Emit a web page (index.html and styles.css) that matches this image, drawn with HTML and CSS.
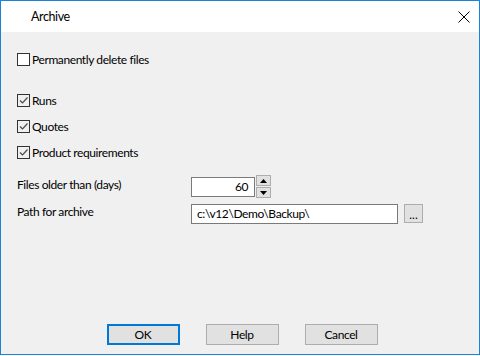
FILE: index.html
```html
<!doctype html>
<html lang="en">
  <head>
    <meta charset="UTF-8" />
    <title>Archive</title>
    <link rel="stylesheet" href="styles.css">
  </head>
  <body>
    <div class="window">
      <div class="titlebar">
        <span class="title">Archive</span>
        <svg class="close" width="12" height="12" viewBox="0 0 12 12">
          <path d="M0.5 0.5L11.5 11.5M11.5 0.5L0.5 11.5" stroke="#000" stroke-width="1" fill="none"/>
        </svg>
      </div>

      <div class="content">
        <label class="check">
          <span class="box"></span>
          <span>Permanently delete files</span>
        </label>

        <div class="check-group">
          <label class="check">
            <span class="box checked"><svg viewBox="0 0 11 11"><path d="M2 5.5L4.5 8L9.5 2.5" /></svg></span>
            <span>Runs</span>
          </label>
          <label class="check">
            <span class="box checked"><svg viewBox="0 0 11 11"><path d="M2 5.5L4.5 8L9.5 2.5" /></svg></span>
            <span>Quotes</span>
          </label>
          <label class="check">
            <span class="box checked"><svg viewBox="0 0 11 11"><path d="M2 5.5L4.5 8L9.5 2.5" /></svg></span>
            <span>Product requirements</span>
          </label>
        </div>

        <div class="fields">
          <span class="field-label">Files older than (days)</span>
          <div class="field-row">
            <div class="input number">60</div>
            <div class="spinner">
              <span class="spin up"><svg viewBox="0 0 7 4"><path d="M3.5 0L7 4H0z"/></svg></span>
              <span class="spin down"><svg viewBox="0 0 7 4"><path d="M0 0H7L3.5 4z"/></svg></span>
            </div>
          </div>

          <span class="field-label">Path for archive</span>
          <div class="field-row">
            <div class="input path">c:\v12\Demo\Backup\</div>
            <button class="browse">...</button>
          </div>
        </div>
      </div>

      <div class="buttons">
        <button class="btn default">OK</button>
        <button class="btn">Help</button>
        <button class="btn">Cancel</button>
      </div>
    </div>
  </body>
</html>
```

FILE: styles.css
```css
* {
  margin: 0;
  padding: 0;
  box-sizing: border-box;
}

body {
  background: #fff;
  font-family: Lato, "Noto Sans", sans-serif;
  font-size: 12px;
  letter-spacing: -0.4px;
  color: #000;
}

.window {
  width: 480px;
  height: 355px;
  border: 1px solid #1883d7;
  background: #f0f0f0;
  display: flex;
  flex-direction: column;
}

.titlebar {
  height: 31px;
  background: #fff;
  display: flex;
  align-items: center;
  justify-content: space-between;
  padding: 0 9px 0 30px;
}

.title {
  font-size: 12.5px;
  margin-top: -1px;
}

.content {
  padding: 21px 16px 0;
}

.check {
  display: flex;
  align-items: center;
  height: 13px;
  line-height: 13px;
}

.box {
  width: 13px;
  height: 13px;
  border: 1px solid #333;
  background: #fff;
  margin-right: 2px;
  display: flex;
}

.box.checked {
  background: transparent;
}

.box svg {
  width: 11px;
  height: 11px;
  fill: none;
  stroke: #4a4a4a;
  stroke-width: 1.2;
}

.check-group {
  margin-top: 28px;
  display: flex;
  flex-direction: column;
  gap: 13px;
}

.fields {
  margin-top: 18px;
  display: grid;
  grid-template-columns: 174px auto;
  row-gap: 6px;
}

.field-label {
  line-height: 15px;
}

.field-row {
  display: flex;
  align-items: flex-start;
}

.input {
  height: 20px;
  border: 1px solid #7a7a7a;
  background: #fff;
  line-height: 18px;
  padding: 0 6px;
}

.number {
  width: 64px;
  text-align: right;
}

.path {
  width: 207px;
  padding-left: 5px;
}

.spinner {
  margin-left: 1px;
  margin-top: -2px;
  display: flex;
  flex-direction: column;
  gap: 1px;
}

.spin {
  width: 15px;
  height: 11px;
  background: #e1e1e1;
  border: 1px solid #adadad;
  display: flex;
  align-items: center;
  justify-content: center;
}

.spin svg {
  width: 7px;
  height: 4px;
  fill: #000;
}

.browse {
  margin-left: 6px;
  width: 19px;
  height: 19px;
  background: #e1e1e1;
  border: 1px solid #adadad;
  font-family: inherit;
  font-size: 12px;
  line-height: 20px;
  color: #000;
}

.buttons {
  margin-top: auto;
  padding-bottom: 9px;
  display: flex;
  justify-content: center;
  gap: 26px;
  padding-left: 4px;
}

.btn {
  width: 73px;
  height: 21px;
  background: #e1e1e1;
  border: 1px solid #adadad;
  font-family: inherit;
  font-size: 12px;
  letter-spacing: -0.4px;
  color: #000;
}

.btn.default {
  border: 2px solid #0078d7;
}
```
